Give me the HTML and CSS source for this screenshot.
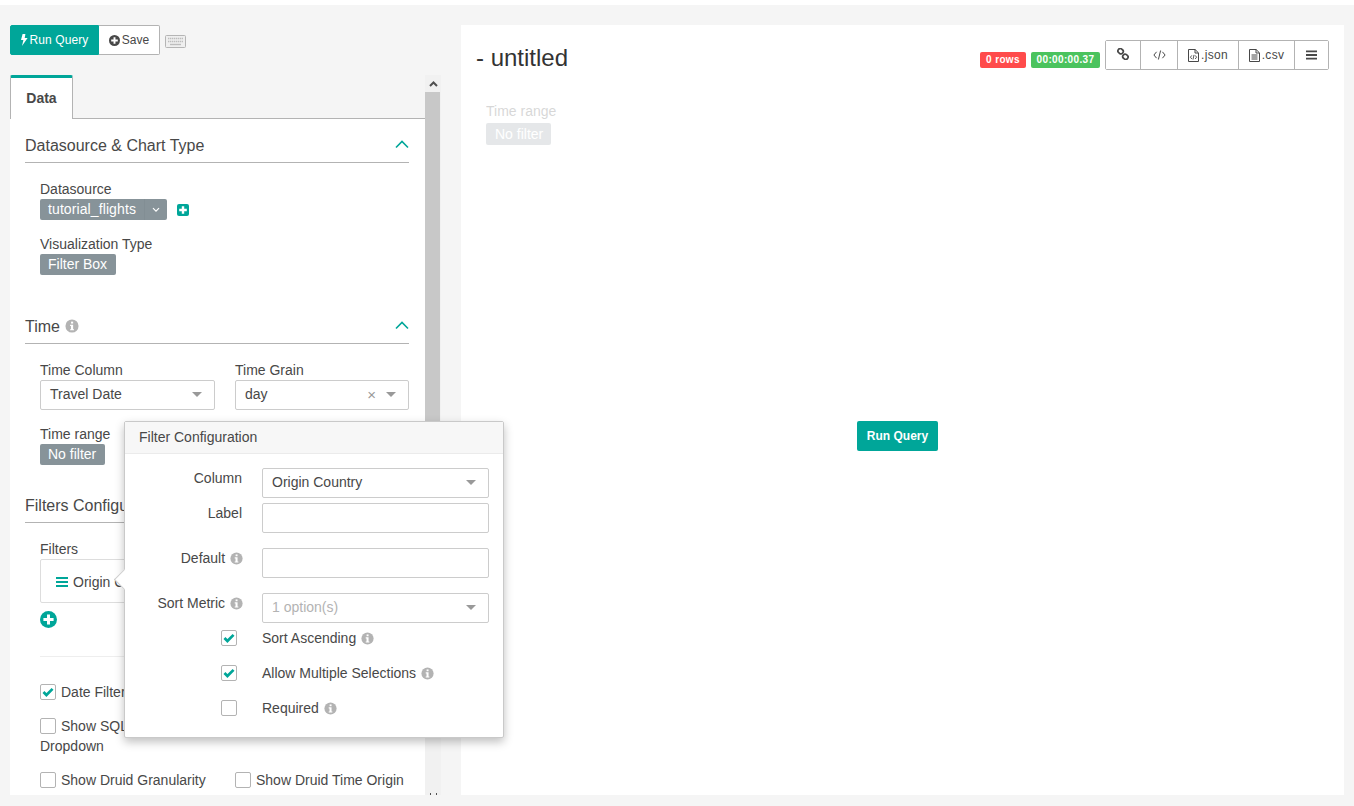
FILE: index.html
```html
<!DOCTYPE html>
<html lang="en">
<head>
<meta charset="utf-8">
<title>Explore - untitled</title>
<link rel="stylesheet" href="styles.css">
</head>
<body>
<svg class="defs" width="0" height="0" aria-hidden="true">
  <defs>
    <symbol id="i-info" viewBox="0 0 16 16"><circle cx="8" cy="8" r="7.5" fill="currentColor"/><rect x="6.9" y="3" width="2.4" height="2.2" fill="#fff"/><path d="M5.8 6.6h3.5v5h1v1.3H5.8v-1.3h1v-3.7h-1z" fill="#fff"/></symbol>
    <symbol id="i-plus-circle" viewBox="0 0 16 16"><circle cx="8" cy="8" r="8" fill="currentColor"/><path d="M6.6 3.2h2.8v3.4h3.4v2.8H9.4v3.4H6.6V9.4H3.2V6.6h3.4z" fill="#fff"/></symbol>
    <symbol id="i-check" viewBox="0 0 16 16"><path d="M2.8 8l3.4 3.4 7-7" fill="none" stroke="#00a699" stroke-width="3.1"/></symbol>
    <symbol id="i-up" viewBox="0 0 14 10"><path d="M1 8.5l6-6 6 6" fill="none" stroke="currentColor" stroke-width="1.6"/></symbol>
    <symbol id="i-bars" viewBox="0 0 12 10"><path d="M0 0h12v2H0zM0 4h12v2H0zM0 8h12v2H0z" fill="currentColor"/></symbol>
  </defs>
</svg>

<div class="explore">
  <aside class="controls">
    <div class="toolbar">
      <div class="btn-pair">
        <button class="btn btn-primary" type="button">
          <svg class="ic-bolt" viewBox="0 0 7 12"><path d="M4.4 0H1.6L0 6h2.4L1 12l5.6-8H3.7z" fill="#fff"/></svg>Run Query
        </button>
        <button class="btn btn-save" type="button">
          <svg class="ic-save"><use href="#i-plus-circle"/></svg>Save
        </button>
      </div>
      <svg class="ic-keyboard" viewBox="0 0 21 13">
        <rect x=".5" y=".5" width="20" height="12" rx="1" fill="#efefef" stroke="#b5b5b5"/>
        <path d="M3 3.5h15M3 6.5h15" stroke="#bdbdbd" stroke-width="1.4" stroke-dasharray="1.4 .6"/>
        <path d="M5 9.5h11" stroke="#bdbdbd" stroke-width="1.4"/>
      </svg>
    </div>

    <div class="scroller">
      <div class="panel">
        <div class="tabs"><div class="tab">Data</div></div>

        <section class="section section-tall">
          <header class="section-head"><span>Datasource &amp; Chart Type</span><svg class="ic-up"><use href="#i-up"/></svg></header>
          <div class="row">
            <div class="field">
              <div class="label">Datasource</div>
              <div class="ds-line">
                <span class="tag tag-ds"><span class="tag-main">tutorial_flights</span><span class="tag-caret"><svg viewBox="0 0 8 6" class="ic-caret"><path d="M1 1.2l3 3 3-3" fill="none" stroke="#fff" stroke-width="1.2"/></svg></span></span>
                <svg class="ic-plus-square" viewBox="0 0 12 12"><rect width="12" height="12" rx="2" fill="#00a699"/><path d="M4.8 2.2h2.4v2.6h2.6v2.4H7.2v2.6H4.8V7.2H2.2V4.8h2.6z" fill="#fff"/></svg>
              </div>
            </div>
          </div>
          <div class="row">
            <div class="field">
              <div class="label">Visualization Type</div>
              <span class="tag">Filter Box</span>
            </div>
          </div>
        </section>

        <section class="section">
          <header class="section-head"><span>Time <svg class="ic-info-lg"><use href="#i-info"/></svg></span><svg class="ic-up"><use href="#i-up"/></svg></header>
          <div class="row two-col">
            <div class="field">
              <div class="label">Time Column</div>
              <div class="select"><span class="select-value">Travel Date</span><span class="arrow"></span></div>
            </div>
            <div class="field">
              <div class="label">Time Grain</div>
              <div class="select"><span class="select-value">day</span><span class="clear">×</span><span class="arrow"></span></div>
            </div>
          </div>
          <div class="row">
            <div class="field">
              <div class="label">Time range</div>
              <span class="tag">No filter</span>
            </div>
          </div>
        </section>

        <section class="section">
          <header class="section-head"><span>Filters Configuration</span><svg class="ic-up"><use href="#i-up"/></svg></header>
          <div class="field">
            <div class="label">Filters</div>
            <div class="filter-box"><svg class="ic-bars"><use href="#i-bars"/></svg>Origin Country</div>
            <svg class="ic-add"><use href="#i-plus-circle"/></svg>
          </div>
          <hr class="divider">
          <div class="row two-col">
            <label class="check"><span class="box"><svg><use href="#i-check"/></svg></span>Date Filter</label>
          </div>
          <div class="row two-col">
            <label class="check"><span class="box"></span>Show SQL Granularity Dropdown</label>
          </div>
          <div class="row two-col">
            <label class="check"><span class="box"></span>Show Druid Granularity</label>
            <label class="check"><span class="box"></span>Show Druid Time Origin</label>
          </div>
        </section>
      </div>

      <div class="scrollbar">
        <div class="sb-up"><svg viewBox="0 0 9 6"><path d="M1 5l3.5-3.5L8 5" fill="none" stroke="#505050" stroke-width="2"/></svg></div>
        <div class="sb-thumb"></div>
        <div class="sb-track"></div>
        <div class="sb-down"><span></span><span></span></div>
      </div>
    </div>
  </aside>

  <main class="chart">
    <header class="chart-head">
      <h1 class="chart-title">- untitled</h1>
      <div class="chart-actions">
        <span class="badge badge-red">0 rows</span>
        <span class="badge badge-green">00:00:00.37</span>
        <div class="btn-group">
          <button class="gbtn gbtn-link" type="button" aria-label="Link">
            <svg class="ic-link" viewBox="0 0 12 12"><g fill="none" stroke="#484848" stroke-width="1.7"><rect x=".9" y=".9" width="5.4" height="4.6" rx="2.2" transform="rotate(40 3.6 3.2)"/><rect x="5.7" y="6.5" width="5.4" height="4.6" rx="2.2" transform="rotate(40 8.4 8.8)"/></g></svg>
          </button>
          <button class="gbtn gbtn-code" type="button" aria-label="Embed">
            <svg class="ic-code" viewBox="0 0 13 10"><path d="M3.6 1.8L.9 5l2.7 3.2M9.4 1.8L12.1 5 9.4 8.2M7.6.5L5.4 9.5" fill="none" stroke="#484848" stroke-width="1"/></svg>
          </button>
          <button class="gbtn gbtn-json" type="button">
            <svg class="ic-file" viewBox="0 0 11 13"><path d="M.5.5h6.6l3.4 3.4v8.6H.5z" fill="#fff" stroke="#484848"/><path d="M7 .5v3.5h3.5" fill="none" stroke="#484848"/><path d="M3.8 6.4L2.4 8.2l1.4 1.8M7.2 6.4l1.4 1.8L7.2 10M6 5.9l-1 4.6" fill="none" stroke="#484848" stroke-width=".9"/></svg>.json
          </button>
          <button class="gbtn gbtn-csv" type="button">
            <svg class="ic-file" viewBox="0 0 11 13"><path d="M.5.5h6.6l3.4 3.4v8.6H.5z" fill="#fff" stroke="#484848"/><path d="M7 .5v3.5h3.5" fill="none" stroke="#484848"/><path d="M2.5 6h6M2.5 8h6M2.5 10h6" stroke="#484848"/></svg>.csv
          </button>
          <button class="gbtn gbtn-menu" type="button" aria-label="Menu">
            <svg class="ic-menu"><use href="#i-bars"/></svg>
          </button>
        </div>
      </div>
    </header>
    <div class="chart-body">
      <div class="faded-filter">
        <div class="label">Time range</div>
        <span class="tag tag-faded">No filter</span>
      </div>
      <button class="btn-run-overlay" type="button">Run Query</button>
    </div>
  </main>
</div>

<div class="popover">
  <span class="popover-arrow"></span>
  <div class="popover-title">Filter Configuration</div>
  <div class="popover-body">
    <div class="form-row form-row-tight">
      <div class="form-label">Column</div>
      <div class="select"><span class="select-value">Origin Country</span><span class="arrow"></span></div>
    </div>
    <div class="form-row">
      <div class="form-label">Label</div>
      <div class="input"></div>
    </div>
    <div class="form-row">
      <div class="form-label">Default <svg class="ic-info"><use href="#i-info"/></svg></div>
      <div class="input"></div>
    </div>
    <div class="form-row form-row-select">
      <div class="form-label">Sort Metric <svg class="ic-info"><use href="#i-info"/></svg></div>
      <div class="select"><span class="select-value placeholder">1 option(s)</span><span class="arrow"></span></div>
    </div>
    <div class="form-check">
      <span class="box"><svg><use href="#i-check"/></svg></span>
      <span class="form-check-text">Sort Ascending <svg class="ic-info"><use href="#i-info"/></svg></span>
    </div>
    <div class="form-check">
      <span class="box"><svg><use href="#i-check"/></svg></span>
      <span class="form-check-text">Allow Multiple Selections <svg class="ic-info"><use href="#i-info"/></svg></span>
    </div>
    <div class="form-check">
      <span class="box"></span>
      <span class="form-check-text">Required <svg class="ic-info"><use href="#i-info"/></svg></span>
    </div>
  </div>
</div>
</body>
</html>
```

FILE: styles.css
```css
* { box-sizing: border-box; }
html, body { height: 100%; }
body {
  margin: 0;
  position: relative;
  overflow: hidden;
  background: #f5f5f5;
  border-top: 5px solid #fff;
  color: #484848;
  font: 14px/20px "Liberation Sans", Arial, sans-serif;
}
.defs { position: absolute; }
svg { display: inline-block; }
button { font-family: inherit; margin: 0; cursor: pointer; }

.explore {
  display: flex;
  gap: 20px;
  height: 801px;
  padding: 20px 10px 11px;
}

/* Left column */
.controls { display: flex; flex-direction: column; width: 431px; flex: none; }
.toolbar { display: flex; align-items: center; gap: 5px; height: 30px; margin-bottom: 20px; }
.btn-pair { display: flex; }
.btn {
  display: flex;
  align-items: center;
  height: 30px;
  border-radius: 2px;
  font-size: 12px;
  padding: 0;
  justify-content: center;
}
.btn-primary { width: 89px; background: #00a699; border: 1px solid #00a699; color: #fff; border-radius: 2px 0 0 2px; letter-spacing: .1px; }
.btn-save { width: 61px; background: #fff; border: 1px solid #b3b3b3; border-left: 0; color: #484848; border-radius: 0 2px 2px 0; }
.ic-bolt { width: 7px; height: 12px; margin-right: 2px; }
.ic-save { width: 11px; height: 11px; margin-right: 2px; color: #484848; }
.ic-keyboard { width: 21px; height: 13px; margin-top: 2px; }

.scroller { display: flex; flex: 1; min-height: 0; overflow: hidden; }
.panel { width: 415px; flex: none; overflow: hidden; background: #fff; }
.tabs { display: flex; height: 44px; background: #f5f5f5; border-bottom: 1px solid #b3b3b3; }
.tab {
  width: 63px;
  height: 44px;
  background: #fff;
  border: 1px solid #b3b3b3;
  border-top: 3px solid #00a699;
  border-bottom: 0;
  border-radius: 2px 2px 0 0;
  font-weight: 700;
  text-align: center;
  line-height: 41px;
}
.section { padding: 12px 16px 0 15px; }
.section-tall { padding-bottom: 11px; }
.section-head {
  display: flex;
  justify-content: space-between;
  align-items: flex-start;
  height: 32px;
  margin-bottom: 16px;
  border-bottom: 1px solid #b3b3b3;
  font-size: 16px;
  line-height: 29px;
}
.ic-up { width: 14px; height: 10px; margin-top: 8px; color: #00a699; }
.ic-info-lg { width: 14px; height: 14px; color: #b3b3b3; vertical-align: -1px; margin-left: 1px; }
.row { margin: 0 0 14px 15px; }
.two-col { display: grid; grid-template-columns: 175px 174px; column-gap: 20px; }
.label { height: 20px; }
.tag {
  display: inline-block;
  height: 21px;
  padding: 0 9px 0 8px;
  background: #879399;
  border-radius: 2px;
  color: #fff;
  line-height: 21px;
  vertical-align: top;
}
.tag-ds { display: inline-flex; padding: 0; }
.tag-main { padding: 0 8px; letter-spacing: .1px; }
.tag-caret { display: flex; align-items: center; justify-content: center; width: 23px; border-left: 1px solid #828e94; }
.ic-caret { width: 8px; height: 6px; }
.ds-line { display: flex; align-items: center; gap: 10px; }
.ic-plus-square { width: 12px; height: 12px; margin-top: 1px; }

.select, .input {
  display: flex;
  align-items: center;
  height: 30px;
  background: #fff;
  border: 1px solid #ccc;
  border-radius: 2px;
}
.select { padding: 0 12px 2px 9px; }
.select-value { flex: 1; line-height: 26px; }
.placeholder { color: #b3b3b3; }
.clear { color: #999; font-size: 15px; margin-right: 10px; line-height: 20px; margin-top: 2px; }
.arrow { width: 0; height: 0; border: 5.5px solid transparent; border-top-color: #999; border-bottom: 0; margin-top: 1px; }

.field { min-width: 0; }
.section > .field { margin-left: 15px; }
.filter-box {
  display: flex;
  align-items: center;
  width: 369px;
  height: 44px;
  padding: 1px 0 0 15px;
  border: 1px solid #ddd;
  border-radius: 2px;
}
.ic-bars { width: 12px; height: 10px; margin-right: 5px; color: #00a699; }
.ic-add { display: block; width: 17px; height: 17px; margin-top: 8px; color: #00a699; }
.divider { height: 1px; margin: 28px 0 25px 15px; border: 0; background: #eee; }
.check { display: block; }
.box {
  display: inline-block;
  width: 16px;
  height: 16px;
  margin-right: 5px;
  vertical-align: -3px;
  background: #fff;
  border: 1px solid #b3b3b3;
  border-radius: 2px;
}
.box svg { display: block; width: 14px; height: 14px; }

/* Fake scrollbar */
.scrollbar { display: flex; flex-direction: column; width: 16px; flex: none; background: #f1f1f1; }
.sb-up { height: 17px; display: flex; align-items: center; justify-content: center; }
.sb-up svg { width: 9px; height: 6px; }
.sb-thumb { height: 646px; width: 15px; background: #c8c8c8; }
.sb-track { flex: 1; }
.sb-down { display: flex; justify-content: center; gap: 5px; height: 2px; flex: none; }
.sb-down span { width: 1px; height: 2px; background: #505050; }

/* Right column */
.chart { flex: 1; min-width: 0; background: #fff; padding: 15px 15px 0; display: flex; flex-direction: column; }
.chart-head { display: flex; justify-content: space-between; align-items: center; height: 30px; }
.chart-title { margin: 6px 0 0; font-size: 24px; font-weight: 400; line-height: 36px; color: #333; }
.chart-actions { display: flex; align-items: center; gap: 5px; }
.badge {
  height: 16px;
  border-radius: 2px;
  color: #fff;
  font-size: 10px;
  font-weight: 700;
  line-height: 16px;
  letter-spacing: .35px;
  margin-top: 9px;
  text-align: center;
}
.badge-red { width: 46px; background: #ff4b4b; }
.badge-green { width: 69px; background: #4bc35e; }
.btn-group { display: flex; height: 30px; border: 1px solid #b3b3b3; border-radius: 2px; }
.gbtn {
  display: flex;
  align-items: center;
  justify-content: center;
  height: 28px;
  padding: 0;
  border: 0;
  border-right: 1px solid #b3b3b3;
  background: #fff;
  color: #484848;
  font-size: 12px;
  letter-spacing: .3px;
}
.gbtn-link { width: 35px; }
.gbtn-code { width: 37px; }
.gbtn-json { width: 61px; }
.gbtn-csv { width: 56px; }
.gbtn-menu { width: 33px; border-right: 0; }
.ic-link { width: 12px; height: 12px; margin-top: -2px; }
.ic-code { width: 13px; height: 10px; }
.ic-file { width: 11px; height: 13px; margin-right: 2px; }
.ic-menu { width: 11px; height: 10px; color: #484848; }

.chart-body { position: relative; flex: 1; padding: 31px 0 0 10px; }
.faded-filter { opacity: .21; }
.tag-faded { height: 22px; padding: 0 8px 0 9px; line-height: 22px; margin-top: 2px; }
.btn-run-overlay {
  position: absolute;
  left: 381px;
  top: 351px;
  width: 81px;
  height: 30px;
  border: 0;
  border-radius: 2px;
  background: #00a699;
  color: #fff;
  font-size: 12px;
  font-weight: 700;
}

/* Popover */
.popover {
  position: absolute;
  left: 124px;
  top: 416px;
  width: 380px;
  height: 317px;
  background: #fff;
  border: 1px solid #c9c9c9;
  border-radius: 2px;
  box-shadow: 0 4px 10px rgba(0, 0, 0, .25);
}
.popover-arrow {
  position: absolute;
  left: -8px;
  top: 150px;
  width: 15px;
  height: 15px;
  background: #fff;
  border-left: 1px solid #ccc;
  border-bottom: 1px solid #ccc;
  transform: rotate(45deg);
}
.popover-title {
  position: relative;
  height: 32px;
  padding-left: 14px;
  background: #f7f7f7;
  border-bottom: 1px solid #ebebeb;
  line-height: 31px;
}
.popover-body { position: relative; padding: 14px 14px 0 0; background: #fff; }
.form-row { display: grid; grid-template-columns: 117px 227px; column-gap: 20px; margin-bottom: 15px; }
.form-row-tight { margin-bottom: 5px; }
.form-row-select { margin-bottom: 7px; }
.form-label { text-align: right; white-space: nowrap; }
.ic-info { width: 13px; height: 13px; color: #b3b3b3; vertical-align: -2px; margin: 0 -1px 0 1px; }
.form-check { display: grid; grid-template-columns: 117px 227px; grid-auto-rows: 16px; column-gap: 20px; align-items: center; height: 16px; margin-bottom: 19px; line-height: 16px; }
.form-check .box { justify-self: end; margin-right: 5px; }
.form-check-text { white-space: nowrap; }
```
